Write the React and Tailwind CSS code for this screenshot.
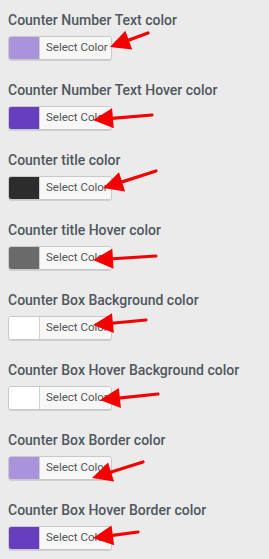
import React from "react";

const rows = [
  { label: "Counter Number Text color", swatch: "bg-[#a993db]", tip: [110, 47], tail: [148, 33] },
  { label: "Counter Number Text Hover color", swatch: "bg-[#673ebd]", tip: [93, 50], tail: [152, 45] },
  { label: "Counter title color", swatch: "bg-[#2c2c2c]", tip: [103, 48], tail: [156, 31] },
  { label: "Counter title Hover color", swatch: "bg-[#6a6a6a]", tip: [93, 50], tail: [156, 46] },
  { label: "Counter Box Background color", swatch: "bg-white", tip: [93, 45], tail: [146, 40] },
  { label: "Counter Box Hover Background color", swatch: "bg-white", tip: [100, 50], tail: [158, 44] },
  { label: "Counter Box Border color", swatch: "bg-[#a993db]", tip: [92, 58], tail: [143, 42] },
  { label: "Counter Box Hover Border color", swatch: "bg-[#673ebd]", tip: [93, 48], tail: [138, 42] },
];

function Arrow({ tip, tail }) {
  const [tx, ty] = tip;
  const [sx, sy] = tail;
  const dx = tx - sx;
  const dy = ty - sy;
  const len = Math.hypot(dx, dy);
  const ux = dx / len;
  const uy = dy / len;
  const headLen = 20;
  const headHalf = 10;
  const bx = tx - ux * headLen;
  const by = ty - uy * headLen;
  const px = -uy;
  const py = ux;
  const p1 = `${tx},${ty}`;
  const p2 = `${bx + px * headHalf},${by + py * headHalf}`;
  const p3 = `${bx - px * headHalf},${by - py * headHalf}`;
  const lx = tx - ux * (headLen - 4);
  const ly = ty - uy * (headLen - 4);
  return (
    <svg className="absolute left-0 top-0 pointer-events-none" width="269" height="70" viewBox="0 0 269 70">
      <line x1={sx} y1={sy} x2={lx} y2={ly} stroke="#f40000" strokeWidth="3.2" strokeLinecap="round" />
      <polygon points={`${p1} ${p2} ${p3}`} fill="#f40000" />
    </svg>
  );
}

export default function App() {
  return (
    <div className="w-[269px] h-[559px] bg-[#ebebeb] overflow-hidden" style={{ fontFamily: "Roboto, 'Noto Sans', sans-serif" }}>
      {rows.map((r, i) => (
        <div key={i} className="relative h-[70px] px-[8px] pt-[10px]">
          <div className="text-[14px] leading-[20px] font-medium text-[#50575e] whitespace-nowrap">{r.label}</div>
          <div className="mt-[6px] flex w-[104px] h-[24px] rounded-[3px] border border-[#c9c9c9] overflow-hidden shadow-[0_1px_0_#d0d0d0]">
            <div className={`w-[31px] h-full ${r.swatch} border-r border-[#cfcfcf]`} />
            <div className="flex-1 bg-[#f7f7f7] flex items-center pl-[6px] text-[11.5px] text-[#555] whitespace-nowrap">Select Color</div>
          </div>
          <Arrow tip={r.tip} tail={r.tail} />
        </div>
      ))}
    </div>
  );
}
